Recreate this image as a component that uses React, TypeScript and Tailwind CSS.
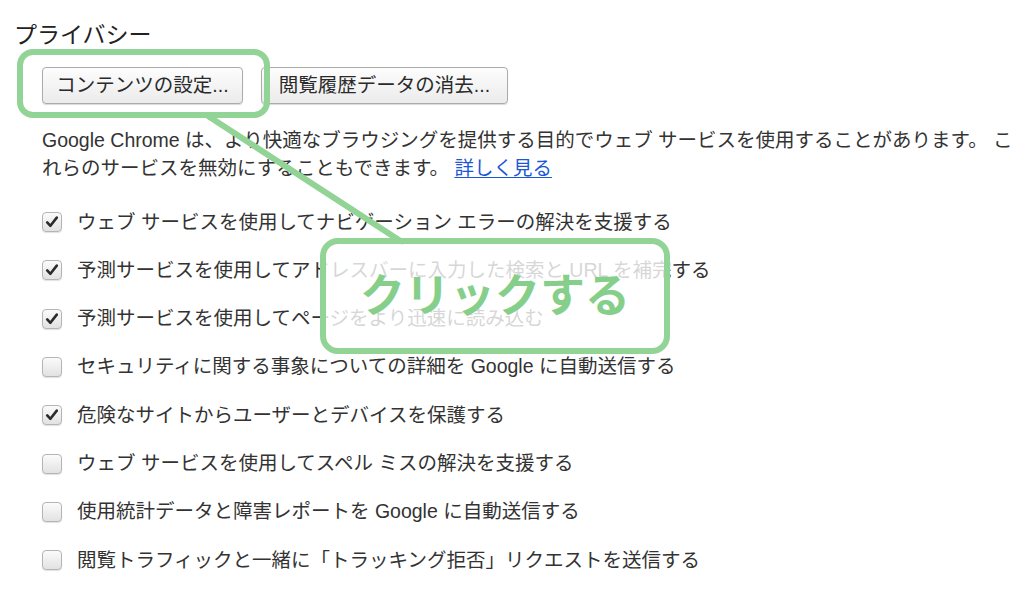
import { Fragment } from 'react';

const FONT = '"Liberation Sans", "Noto Sans CJK JP", sans-serif';

const options = [
    { label: 'ウェブ サービスを使用してナビゲーション エラーの解決を支援する', checked: true },
    { label: '予測サービスを使用してアドレスバーに入力した検索と URL を補完する', checked: true },
    { label: '予測サービスを使用してページをより迅速に読み込む', checked: true },
    { label: 'セキュリティに関する事象についての詳細を Google に自動送信する', checked: false },
    { label: '危険なサイトからユーザーとデバイスを保護する', checked: true },
    { label: 'ウェブ サービスを使用してスペル ミスの解決を支援する', checked: false },
    { label: '使用統計データと障害レポートを Google に自動送信する', checked: false },
    { label: '閲覧トラフィックと一緒に「トラッキング拒否」リクエストを送信する', checked: false },
];

function Checkbox({ checked }: { checked: boolean }) {
    return (
        <div className="w-[20px] h-[20px] shrink-0 rounded-[4px] border border-[#b5b5b5] bg-gradient-to-b from-[#fbfbfb] to-[#e2e2e2] shadow-[0_1px_1px_rgba(0,0,0,0.12)] flex items-center justify-center">
            {checked && (
                <svg width="14" height="14" viewBox="0 0 14 14">
                    <path d="M2.2 7.4 L5.4 10.8 L11.8 2.6" fill="none" stroke="#2b2b2b" strokeWidth="2.6" strokeLinecap="round" strokeLinejoin="round" />
                </svg>
            )}
        </div>
    );
}

function MacButton({ children, width }: { children: string; width: string }) {
    return (
        <button
            className={`${width} h-[37px] rounded-[4px] border border-[#ababab] bg-gradient-to-b from-[#fdfdfd] to-[#ebebeb] shadow-[0_1px_1px_rgba(0,0,0,0.15)] text-[19.5px] text-[#2a2a2a] flex items-center justify-center`}
        >
            {children}
        </button>
    );
}

export default function App() {
    return (
        <div className="relative w-[1024px] h-[609px] bg-white overflow-hidden text-[#333]" style={{ fontFamily: FONT }}>
            <div className="pt-[21px] pl-[14px]">
                <h2 className="text-[23px] leading-[28px] text-[#222]">プライバシー</h2>
            </div>

            <div className="pl-[42px]">
                <div className="mt-[18px] flex gap-[18px]">
                    <MacButton width="w-[201px]">コンテンツの設定...</MacButton>
                    <MacButton width="w-[247px]">閲覧履歴データの消去...</MacButton>
                </div>

                <p className="mt-[22px] text-[19.5px] leading-[28px] text-[#333] whitespace-nowrap">
                    Google Chrome は、より快適なブラウジングを提供する目的でウェブ サービスを使用することがあります。 こ
                    <br />
                    れらのサービスを無効にすることもできます。{' '}
                    <a href="#" className="text-[#1c57d4] underline underline-offset-2">詳しく見る</a>
                </p>

                <div className="mt-[16px] flex flex-col">
                    {options.map((opt) => (
                        <Fragment key={opt.label}>
                            <label className="h-[48.3px] flex items-center gap-[15px]">
                                <Checkbox checked={opt.checked} />
                                <span className="text-[19.5px] text-[#333] whitespace-nowrap">{opt.label}</span>
                            </label>
                        </Fragment>
                    ))}
                </div>
            </div>

            {/* annotation: connector line */}
            <svg className="absolute inset-0 pointer-events-none" width="1024" height="609">
                <line x1="208" y1="116" x2="402" y2="242" stroke="#92d396" strokeWidth="6" strokeLinecap="round" />
            </svg>

            {/* annotation: highlight around button */}
            <div className="absolute left-[17px] top-[49px] w-[253px] h-[69px] rounded-[16px] border-[6px] border-[#92d396] pointer-events-none" />

            {/* annotation: callout */}
            <div className="absolute left-[320px] top-[238px] w-[350px] h-[116px] rounded-[18px] border-[6px] border-[#92d396] bg-white/80 flex items-center justify-center pointer-events-none">
                <span className="text-[45px] font-bold text-[#86cf8b] leading-none -mt-[8px]" style={{ fontFamily: '"Noto Sans CJK JP", sans-serif' }}>
                    クリックする
                </span>
            </div>
        </div>
    );
}
